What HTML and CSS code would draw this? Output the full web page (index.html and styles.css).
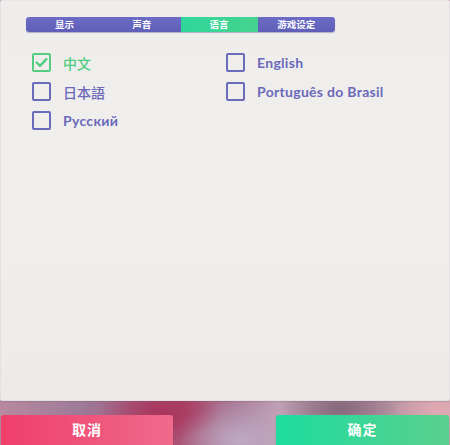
FILE: index.html
```html
<!DOCTYPE html>
<html>
<head>
<meta charset="utf-8">
<link rel="stylesheet" href="styles.css">
</head>
<body>
<div class="screen">
  <div class="panel">
    <div class="tabs">
      <div class="tab">显示</div>
      <div class="tab">声音</div>
      <div class="tab active">语言</div>
      <div class="tab">游戏设定</div>
    </div>
    <div class="options">
      <div class="opt checked"><span class="box"><svg viewBox="0 0 20 20" width="20" height="20"><path d="M3.5 10 L8 14.5 L16.5 5.5" fill="none" stroke="#4fcb7e" stroke-width="3" stroke-linecap="round" stroke-linejoin="round"/></svg></span><span class="label cjk">中文</span></div>
      <div class="opt"><span class="box"></span><span class="label">English</span></div>
      <div class="opt"><span class="box"></span><span class="label cjk">日本語</span></div>
      <div class="opt"><span class="box"></span><span class="label">Português do Brasil</span></div>
      <div class="opt"><span class="box"></span><span class="label">Русский</span></div>
    </div>
  </div>
  <div class="actions">
    <button class="btn cancel">取消</button>
    <button class="btn ok">确定</button>
  </div>
</div>
</body>
</html>
```
FILE: styles.css
```css
html, body {
  margin: 0;
  padding: 0;
}
body {
  width: 450px;
  height: 445px;
  overflow: hidden;
  font-family: Lato, "Noto Sans CJK SC", sans-serif;
  background:
    radial-gradient(ellipse 60px 30px at 160px 412px, rgba(170,50,90,0.9), rgba(170,50,90,0) 100%),
    radial-gradient(ellipse 70px 40px at 240px 440px, rgba(190,170,195,1), rgba(190,170,195,0) 100%),
    radial-gradient(ellipse 60px 25px at 340px 408px, rgba(130,100,120,0.9), rgba(130,100,120,0) 100%),
    radial-gradient(ellipse 50px 25px at 440px 410px, rgba(225,170,180,1), rgba(225,170,180,0) 100%),
    linear-gradient(90deg, #b88a9f 0%, #9e7a99 18%, #a8486a 40%, #a87a98 52%, #c0a0b5 62%, #a98a9b 75%, #caa0ab 100%);
}
.screen {
  width: 450px;
  height: 445px;
  display: flex;
  flex-direction: column;
}
.panel {
  height: 401px;
  box-sizing: border-box;
  background: linear-gradient(180deg, #efedec 0%, #f1efee 40%, #eeeae9 100%);
  border: 1px solid #e4e1e2;
  border-top-color: #e9e7e8;
  border-radius: 2px;
  box-shadow: 0 1px 1px rgba(120,80,100,0.25);
  padding: 16px 0 0 25px;
}
.tabs {
  display: flex;
  width: 309px;
  height: 15px;
  border-radius: 3px;
  overflow: hidden;
  background: linear-gradient(180deg, #6c6cc6 0%, #5f5fb8 100%);
  box-shadow: 0 1px 1px rgba(60,60,120,0.35);
}
.tab {
  flex: 1;
  display: flex;
  align-items: center;
  justify-content: center;
  color: #ffffff;
  font-family: "Noto Sans CJK SC", sans-serif;
  font-weight: 700;
  font-size: 9.5px;
  line-height: 15px;
}
.tab.active {
  background: linear-gradient(90deg, #2fd79a 0%, #45d28e 100%);
}
.options {
  display: grid;
  grid-template-columns: 194px 194px;
  grid-auto-rows: 29px;
  padding: 16px 0 0 6px;
}
.opt {
  display: flex;
  align-items: center;
}
.box {
  width: 19px;
  height: 19px;
  box-sizing: border-box;
  border: 2px solid #6b6bbb;
  border-radius: 2px;
  display: flex;
  align-items: center;
  justify-content: center;
  flex: none;
}
.box svg {
  width: 15px;
  height: 15px;
  display: block;
}
.label {
  margin-left: 12px;
  color: #6a6ab9;
  font-size: 14px;
  font-weight: 700;
  letter-spacing: 0.3px;
}
.label.cjk {
  font-family: "Noto Sans CJK SC", sans-serif;
  font-weight: 500;
  font-size: 14px;
  letter-spacing: 0;
}
.opt.checked .box {
  border-color: #55cc80;
}
.opt.checked .label {
  color: #4fcb7e;
}
.actions {
  display: flex;
  justify-content: space-between;
  margin-top: 14px;
  padding: 0 1px;
}
.btn {
  width: 172px;
  height: 30px;
  border: none;
  margin: 0;
  padding: 0 0 2px 0;
  border-radius: 3px 3px 0 0;
  color: #ffffff;
  font-family: "Noto Sans CJK SC", sans-serif;
  font-weight: 700;
  font-size: 14px;
  letter-spacing: 1px;
}
.btn.cancel {
  background: linear-gradient(90deg, #ef3f6b 0%, #ef6a8b 100%);
  box-shadow: 0 1px 1px rgba(140,30,60,0.5);
}
.btn.ok {
  width: 173px;
  background: linear-gradient(90deg, #1edc9f 0%, #5ad08d 100%);
  box-shadow: 0 1px 1px rgba(20,110,70,0.5);
}
```
